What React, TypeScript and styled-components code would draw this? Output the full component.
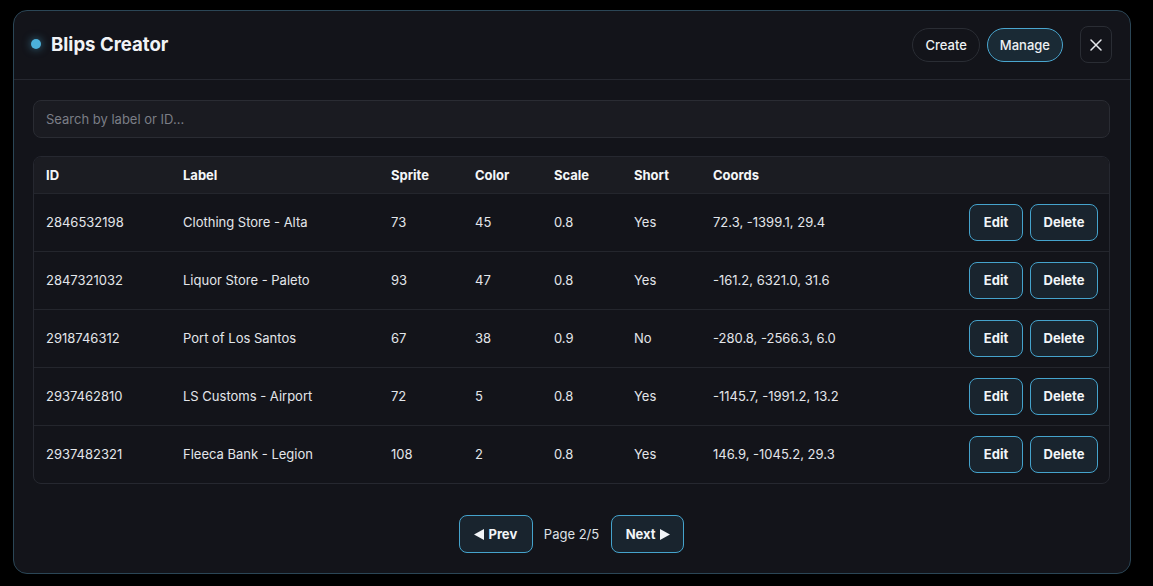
import React from 'react'
import styled, { createGlobalStyle } from 'styled-components'

const GlobalStyle = createGlobalStyle`
  * { box-sizing: border-box; }
  body {
    margin: 0;
    background: #000;
    font-family: Inter, "Noto Sans", sans-serif;
    color: #e6e8ec;
  }
`

const Panel = styled.div`
  margin: 10px 0 0 13px;
  width: 1118px;
  height: 564px;
  background: #13141a;
  border: 1px solid #2b4656;
  border-radius: 14px;
  display: flex;
  flex-direction: column;
  overflow: hidden;
`

const Header = styled.div`
  height: 69px;
  flex-shrink: 0;
  display: flex;
  align-items: center;
  justify-content: space-between;
  padding: 0 18px 0 17px;
  border-bottom: 1px solid #262830;
`

const TitleWrap = styled.div`
  display: flex;
  align-items: center;
  gap: 10px;
  margin-top: -2px;
`

const Dot = styled.span`
  width: 10px;
  height: 10px;
  border-radius: 50%;
  background: #4cb0da;
  box-shadow: 0 0 8px rgba(76, 176, 218, 0.6);
`

const Title = styled.h1`
  margin: 0;
  font-size: 18.6px;
  font-weight: 700;
  color: #f1f3f6;
`

const Actions = styled.div`
  display: flex;
  align-items: center;
  margin-top: -1px;
`

const PillButton = styled.button<{ $active?: boolean }>`
  height: 34px;
  padding: 0 12px;
  border-radius: 17px;
  font-family: inherit;
  font-size: 13px;
  font-weight: 500;
  color: #eef1f4;
  background: ${p => (p.$active ? '#1a2a35' : 'transparent')};
  border: 1px solid ${p => (p.$active ? '#4aa6cf' : '#2a2d34')};
  margin-left: 7px;
`

const CloseButton = styled.button`
  width: 32px;
  height: 37px;
  margin-left: 17px;
  border-radius: 8px;
  background: transparent;
  border: 1px solid #2a2d34;
  color: #e6e8ec;
  display: flex;
  align-items: center;
  justify-content: center;
  padding: 0;
`

const Body = styled.div`
  padding: 20px 20px 0 19px;
  display: flex;
  flex-direction: column;
`

const Search = styled.input`
  height: 38px;
  width: 100%;
  background: #1a1b21;
  border: 1px solid #2a2c33;
  border-radius: 8px;
  padding: 0 12px;
  font-family: inherit;
  font-size: 13px;
  color: #e6e8ec;
  outline: none;
  &::placeholder { color: #7b7e86; }
`

const Table = styled.div`
  margin-top: 18px;
  border: 1px solid #262830;
  border-radius: 8px;
  overflow: hidden;
`

const cols = '137px 208px 84px 79px 80px 79px 1fr auto'

const HeadRow = styled.div`
  display: grid;
  grid-template-columns: ${cols};
  align-items: center;
  height: 36px;
  background: #1b1c22;
  padding: 0 12px;
  font-size: 13px;
  font-weight: 700;
  color: #f4f6f8;
`

const Row = styled.div`
  display: grid;
  grid-template-columns: ${cols};
  align-items: center;
  height: 58px;
  padding: 0 11px 0 12px;
  border-top: 1px solid #24262d;
  font-size: 13px;
  color: #e3e6ea;
`

const Cell = styled.div<{ $shift?: number }>`
  white-space: nowrap;
  margin-top: ${p => p.$shift ?? 0}px;
`

const RowActions = styled.div`
  display: flex;
  gap: 7px;
  margin-top: -1px;
`

const OutlineButton = styled.button<{ $w: number; $h?: number }>`
  width: ${p => p.$w}px;
  height: ${p => p.$h ?? 37}px;
  border-radius: 8px;
  background: #19242e;
  border: 1px solid #45a3cc;
  color: #f2f5f8;
  font-family: inherit;
  font-size: 13px;
  font-weight: 700;
  padding: 0;
  display: inline-flex;
  align-items: center;
  justify-content: center;
  gap: 4px;
`

const Pager = styled.div`
  margin-top: 31px;
  display: flex;
  justify-content: center;
  align-items: center;
  gap: 11px;
`

const PageLabel = styled.span`
  font-size: 13px;
  color: #dfe2e6;
  margin-right: 1px;
`

const blips = [
  ['2846532198', 'Clothing Store - Alta', '73', '45', '0.8', 'Yes', '72.3, -1399.1, 29.4'],
  ['2847321032', 'Liquor Store - Paleto', '93', '47', '0.8', 'Yes', '-161.2, 6321.0, 31.6'],
  ['2918746312', 'Port of Los Santos', '67', '38', '0.9', 'No', '-280.8, -2566.3, 6.0'],
  ['2937462810', 'LS Customs - Airport', '72', '5', '0.8', 'Yes', '-1145.7, -1991.2, 13.2'],
  ['2937482321', 'Fleeca Bank - Legion', '108', '2', '0.8', 'Yes', '146.9, -1045.2, 29.3'],
]

const headings = ['ID', 'Label', 'Sprite', 'Color', 'Scale', 'Short', 'Coords', '']

const Tri = ({ dir }: { dir: 'left' | 'right' }) => (
  <svg width="10" height="11" viewBox="0 0 10 11">
    <path d={dir === 'left' ? 'M10 0 L10 11 L0 5.5 Z' : 'M0 0 L0 11 L10 5.5 Z'} fill="#f2f5f8" />
  </svg>
)

export default function App() {
  return (
    <>
      <GlobalStyle />
      <Panel>
        <Header>
          <TitleWrap>
            <Dot />
            <Title>Blips Creator</Title>
          </TitleWrap>
          <Actions>
            <PillButton>Create</PillButton>
            <PillButton $active>Manage</PillButton>
            <CloseButton>
              <svg width="12" height="12" viewBox="0 0 12 12">
                <path d="M1 1 L11 11 M11 1 L1 11" stroke="#e6e8ec" strokeWidth="1.5" strokeLinecap="round" />
              </svg>
            </CloseButton>
          </Actions>
        </Header>
        <Body>
          <Search placeholder="Search by label or ID..." />
          <Table>
            <HeadRow>
              {headings.map((h, i) => (
                <Cell key={i}>{h}</Cell>
              ))}
            </HeadRow>
            {blips.map(b => (
              <Row key={b[0]}>
                {b.map((v, i) => (
                  <Cell key={i} $shift={-2}>
                    {v}
                  </Cell>
                ))}
                <RowActions>
                  <OutlineButton $w={54} $h={37}>Edit</OutlineButton>
                  <OutlineButton $w={68} $h={37}>Delete</OutlineButton>
                </RowActions>
              </Row>
            ))}
          </Table>
          <Pager>
            <OutlineButton $w={74} $h={38}>
              <Tri dir="left" /> Prev
            </OutlineButton>
            <PageLabel>Page 2/5</PageLabel>
            <OutlineButton $w={73} $h={38}>
              Next <Tri dir="right" />
            </OutlineButton>
          </Pager>
        </Body>
      </Panel>
    </>
  )
}
